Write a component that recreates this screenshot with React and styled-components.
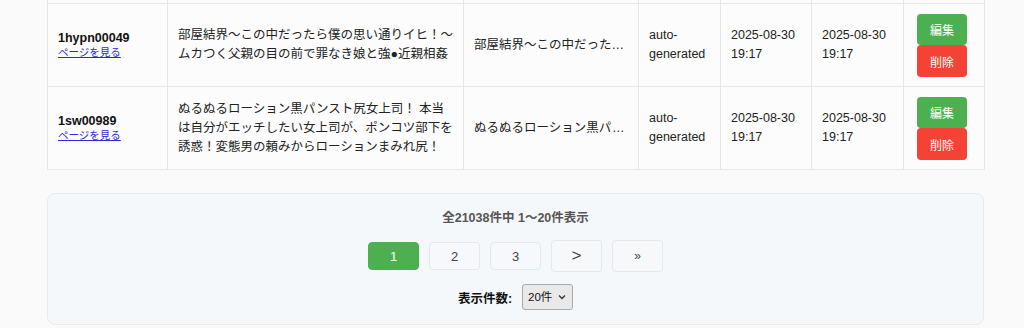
import React from 'react'
import styled, { createGlobalStyle } from 'styled-components'

const GlobalStyle = createGlobalStyle`
  body {
    margin: 0;
    background: #fafafa;
    font-family: "Liberation Sans", "Noto Sans CJK JP", sans-serif;
    color: #333;
  }
`;

const Page = styled.div`
  width: 937px;
  padding: 0 0 0 47px;
`;

const Table = styled.table`
  width: 937px;
  table-layout: fixed;
  border-collapse: collapse;
  background: #fcfcfc;
  font-size: 12.5px;
`;

const Cell = styled.td`
  border: 1px solid #e6e6e6;
  padding: ${({ $pad }) => $pad || '10px'};
  vertical-align: middle;
  line-height: 19px;
  color: #222;
  overflow: hidden;
`;

const StubCell = styled.td`
  border: 1px solid #e6e6e6;
  border-top: none;
  height: 3px;
  padding: 0;
`;

const Code = styled.div`
  font-weight: bold;
  color: #111;
  line-height: 15px;
`;

const PageLink = styled.a`
  display: block;
  font-size: 10.5px;
  line-height: 13px;
  color: #2a2ad8;
  text-decoration: underline;
`;

const Short = styled.div`
  white-space: nowrap;
  overflow: hidden;
  text-overflow: ellipsis;
`;

const ActionButton = styled.button`
  display: block;
  width: 50px;
  height: ${({ $h }) => $h}px;
  border: none;
  border-radius: 4px;
  background: ${({ $variant }) => ($variant === 'danger' ? '#f44336' : '#4caf50')};
  color: #fff;
  font-family: inherit;
  font-size: 12px;
  padding: 0;
`;

const PagerBox = styled.div`
  margin-top: 23px;
  background: #f5f8fb;
  border: 1px solid #e6eaef;
  border-radius: 8px;
  padding: 14px 0 14px;
  display: flex;
  flex-direction: column;
  align-items: center;
`;

const Status = styled.div`
  font-size: 12.5px;
  font-weight: bold;
  color: #555;
  line-height: 20px;
  margin-bottom: 12px;
`;

const PageRow = styled.div`
  display: flex;
  align-items: center;
  gap: 10px;
  height: 32px;
  margin-bottom: 12px;
`;

const PageButton = styled.button`
  width: 51px;
  height: ${({ $tall }) => ($tall ? 32 : 28)}px;
  border: 1px solid ${({ $active }) => ($active ? '#4caf50' : '#e4e7eb')};
  border-radius: 4px;
  background: ${({ $active }) => ($active ? '#4caf50' : '#f6f8fa')};
  color: ${({ $active }) => ($active ? '#fff' : '#444')};
  font-family: inherit;
  font-size: ${({ $size }) => $size || 13}px;
  font-weight: ${({ $light }) => ($light ? 300 : 400)};
  padding: 0;
`;

const SizeRow = styled.div`
  display: flex;
  align-items: center;
  gap: 10px;
  height: 26px;
`;

const SizeLabel = styled.span`
  font-size: 12.5px;
  font-weight: bold;
  color: #111;
`;

const SelectWrap = styled.div`
  position: relative;
  width: 51px;
  height: 26px;
`;

const Select = styled.select`
  appearance: none;
  width: 51px;
  height: 26px;
  background: #e9e9e9;
  border: 1px solid #a9a9a9;
  border-radius: 3px;
  padding: 0 0 0 5px;
  font-family: inherit;
  font-size: 11.5px;
  color: #111;
`;

const Chevron = styled.svg`
  position: absolute;
  right: 7px;
  top: 10px;
  pointer-events: none;
`;

const rows = [
  {
    code: '1hypn00049',
    title: '部屋結界〜この中だったら僕の思い通りイヒ！〜ムカつく父親の目の前で罪なき娘と強●近親相姦',
    short: '部屋結界〜この中だったら僕の思い通りイヒ！',
  },
  {
    code: '1sw00989',
    title: 'ぬるぬるローション黒パンスト尻女上司！ 本当は自分がエッチしたい女上司が、ポンコツ部下を誘惑！変態男の頼みからローションまみれ尻！',
    short: 'ぬるぬるローション黒パンスト尻女上司！',
  },
];

const widths = [120, 296, 175, 82, 91, 92, 81];

export default function App() {
  return (
    <Page>
      <GlobalStyle />
      <Table>
        <colgroup>
          {widths.map((w, i) => <col key={i} style={{ width: w }} />)}
        </colgroup>
        <tbody>
          <tr>
            {widths.map((w, i) => <StubCell key={i} />)}
          </tr>
          {rows.map((r) => (
            <tr key={r.code}>
              <Cell>
                <Code>{r.code}</Code>
                <PageLink href="#">ページを見る</PageLink>
              </Cell>
              <Cell>{r.title}</Cell>
              <Cell><Short>{r.short}</Short></Cell>
              <Cell>auto-generated</Cell>
              <Cell>2025-08-30 19:17</Cell>
              <Cell>2025-08-30 19:17</Cell>
              <Cell $pad="10px 10px 9px 13px">
                <ActionButton $h={31}>編集</ActionButton>
                <ActionButton $h={32} $variant="danger">削除</ActionButton>
              </Cell>
            </tr>
          ))}
        </tbody>
      </Table>
      <PagerBox>
        <Status>全21038件中 1〜20件表示</Status>
        <PageRow>
          <PageButton $active>1</PageButton>
          <PageButton>2</PageButton>
          <PageButton>3</PageButton>
          <PageButton $tall $light $size={17}>&gt;</PageButton>
          <PageButton $tall $size={12}>»</PageButton>
        </PageRow>
        <SizeRow>
          <SizeLabel>表示件数:</SizeLabel>
          <SelectWrap>
            <Select defaultValue="20">
              <option value="20">20件</option>
              <option value="50">50件</option>
              <option value="100">100件</option>
            </Select>
            <Chevron width="8" height="6" viewBox="0 0 8 6">
              <path d="M1 1.5 L4 4.5 L7 1.5" fill="none" stroke="#333" strokeWidth="1.3" />
            </Chevron>
          </SelectWrap>
        </SizeRow>
      </PagerBox>
    </Page>
  );
}
